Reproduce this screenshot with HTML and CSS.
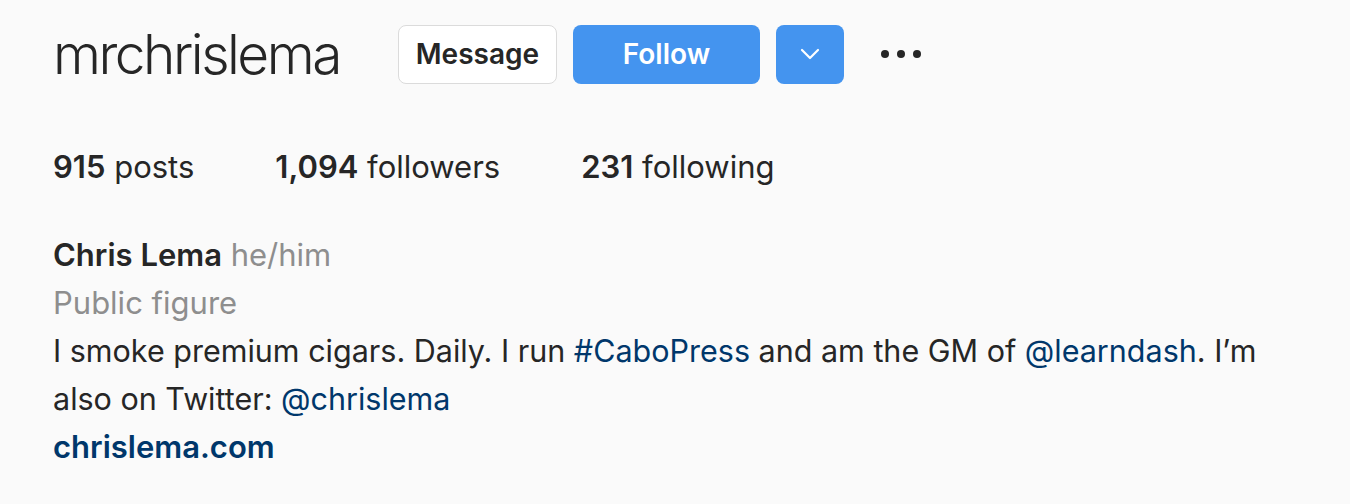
FILE: index.html
```html
<!DOCTYPE html>
<html>
<head>
<meta charset="utf-8">
<link rel="stylesheet" href="styles.css">
</head>
<body>
<section class="profile">
  <div class="title-row">
    <h2 class="username">mrchrislema</h2>
    <div class="actions">
      <button class="btn btn-secondary">Message</button>
      <button class="btn btn-primary btn-follow">Follow</button>
      <button class="btn btn-primary btn-drop" aria-label="Suggested">
        <svg width="20" height="12" viewBox="0 0 20 12"><polyline points="2,2 10,10 18,2" fill="none" stroke="#fff" stroke-width="2.2" stroke-linecap="round" stroke-linejoin="round"/></svg>
      </button>
      <button class="more" aria-label="Options">
        <span class="dot"></span><span class="dot"></span><span class="dot"></span>
      </button>
    </div>
  </div>
  <ul class="stats">
    <li><b>915</b> posts</li>
    <li><b>1,094</b> followers</li>
    <li><b>231</b> following</li>
  </ul>
  <div class="bio">
    <div><b class="name">Chris Lema</b> <span class="muted">he/him</span></div>
    <div class="muted">Public figure</div>
    <div class="text"><span>I smoke premium cigars. Daily. I run</span> <a href="#">#CaboPress</a> <span>and am the GM of</span> <a href="#">@learndash</a><span>. I’m</span><br><span>also on Twitter:</span> <a href="#">@chrislema</a></div>
    <a class="site" href="#">chrislema.com</a>
  </div>
</section>
</body>
</html>
```
FILE: styles.css
```css
* { box-sizing: border-box; }
html, body { margin: 0; padding: 0; }
body {
  background: #fafafa;
  font-family: Inter, "Noto Sans", "Liberation Sans", sans-serif;
  color: #262626;
  width: 1350px;
  height: 504px;
  overflow: hidden;
}
.profile {
  padding: 18px 0 0 53px;
}
.title-row {
  display: flex;
  align-items: center;
  height: 72px;
}
.username {
  margin: 0 58px 0 0;
  font-size: 55px;
  font-weight: 300;
  letter-spacing: -2.5px;
  line-height: 72px;
  color: #262626;
}
.actions {
  display: flex;
  align-items: center;
}
.btn {
  font-family: inherit;
  height: 59px;
  border-radius: 8px;
  font-size: 28px;
  font-weight: 600;
  padding: 0;
  cursor: pointer;
}
.btn-secondary {
  width: 159px;
  background: #fff;
  border: 1px solid #dbdbdb;
  color: #262626;
  margin-right: 16px;
}
.btn-primary {
  background: #4494ef;
  border: none;
  color: #fff;
}
.btn-follow {
  width: 187px;
  margin-right: 16px;
}
.btn-drop {
  width: 68px;
  display: flex;
  align-items: center;
  justify-content: center;
}
.btn-drop svg { display: block; }
.more {
  background: none;
  border: none;
  padding: 0;
  margin-left: 37px;
  display: flex;
  gap: 8px;
  align-items: center;
  height: 40px;
}
.dot {
  width: 8px;
  height: 8px;
  border-radius: 50%;
  background: #262626;
}
.stats {
  list-style: none;
  margin: 0;
  padding: 0;
  display: flex;
  gap: 81px;
  margin-top: 53px;
  font-size: 31px;
  line-height: 48px;
}
.stats b { font-weight: 600; }
.bio {
  margin-top: 40px;
  font-size: 31px;
  line-height: 48px;
  width: 1260px;
}
.name { font-weight: 600; }
.muted { color: #8e8e8e; }
.text { width: 1260px; font-size: 30.5px; white-space: nowrap; }
.bio a { color: #00376b; text-decoration: none; }
.bio a.site { font-weight: 600; display: block; }
```
